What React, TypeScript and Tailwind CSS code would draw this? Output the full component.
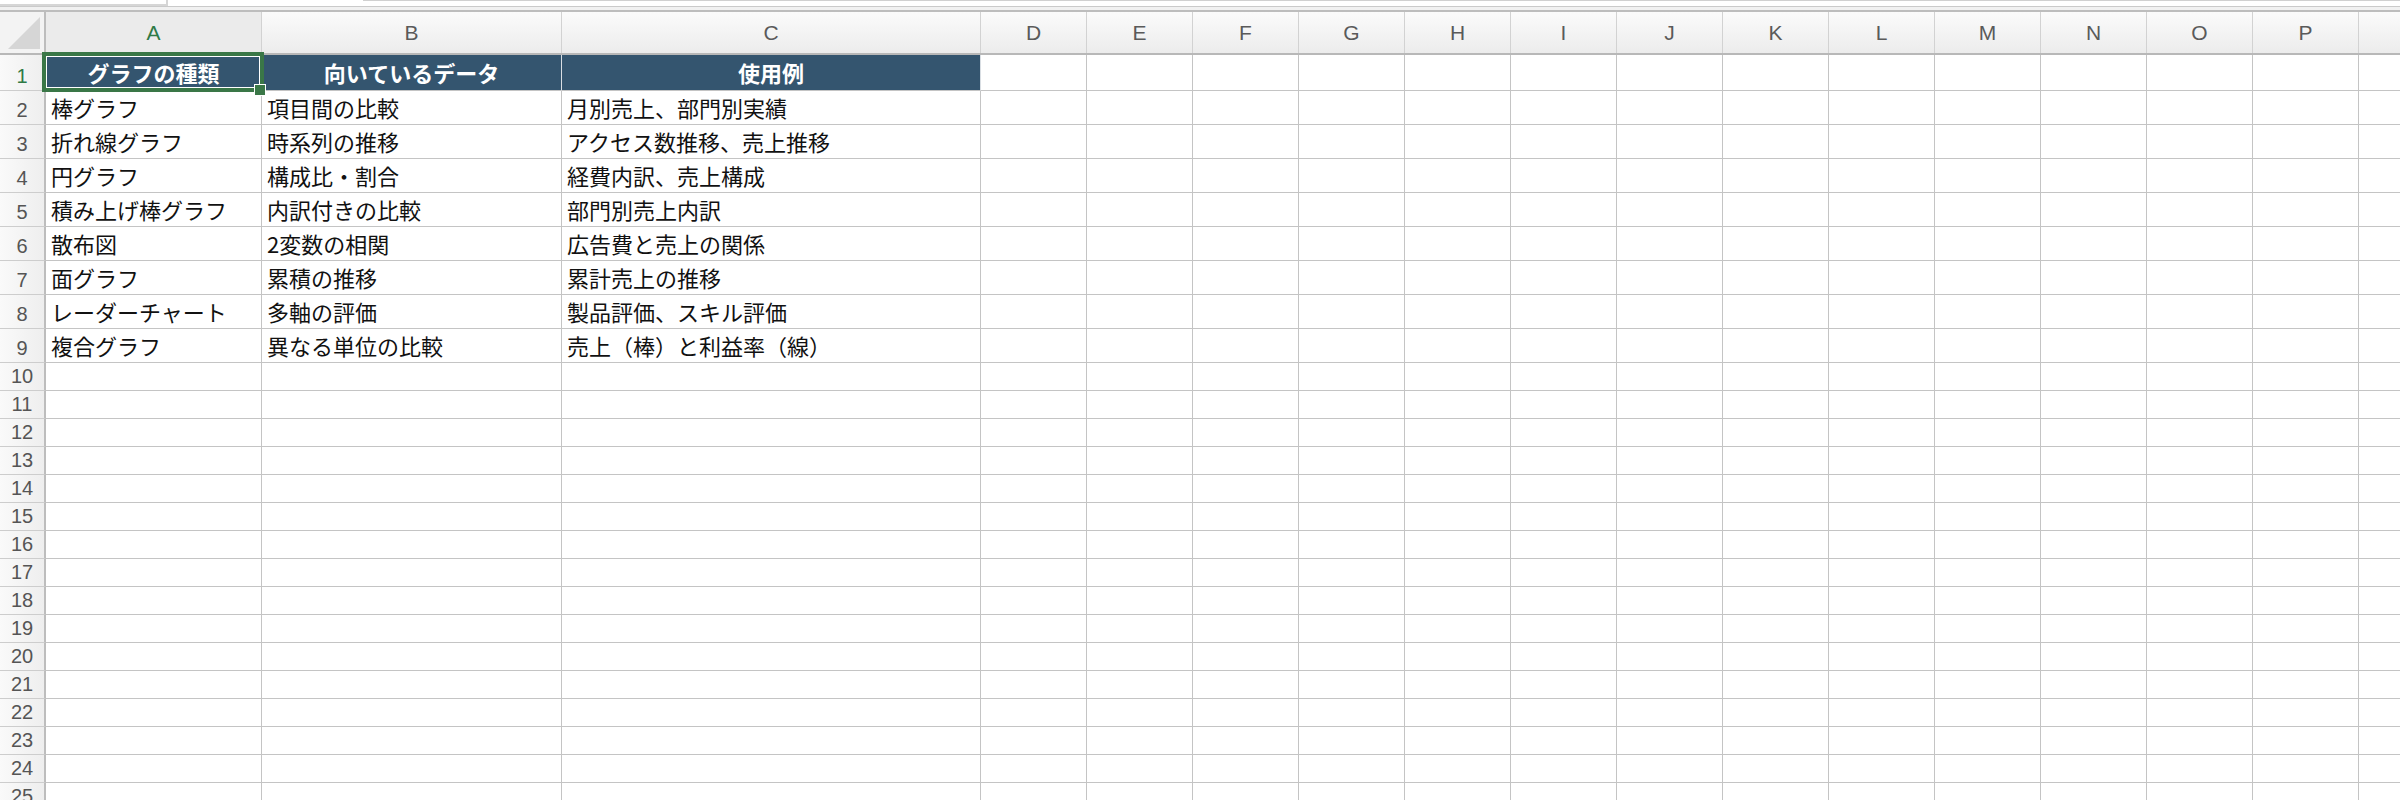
import React from "react";

type Col = { key: string; cls: string };

const COLUMNS: Col[] = [
  { key: "A", cls: "w-[216px]" },
  { key: "B", cls: "w-[300px]" },
  { key: "C", cls: "w-[419px]" },
  { key: "D", cls: "w-[106px]" },
  { key: "E", cls: "w-[106px]" },
  { key: "F", cls: "w-[106px]" },
  { key: "G", cls: "w-[106px]" },
  { key: "H", cls: "w-[106px]" },
  { key: "I", cls: "w-[106px]" },
  { key: "J", cls: "w-[106px]" },
  { key: "K", cls: "w-[106px]" },
  { key: "L", cls: "w-[106px]" },
  { key: "M", cls: "w-[106px]" },
  { key: "N", cls: "w-[106px]" },
  { key: "O", cls: "w-[106px]" },
  { key: "P", cls: "w-[106px]" },
  { key: "", cls: "w-[106px]" },
];

const HEADERS = ["グラフの種類", "向いているデータ", "使用例"];

const DATA: string[][] = [
  ["棒グラフ", "項目間の比較", "月別売上、部門別実績"],
  ["折れ線グラフ", "時系列の推移", "アクセス数推移、売上推移"],
  ["円グラフ", "構成比・割合", "経費内訳、売上構成"],
  ["積み上げ棒グラフ", "内訳付きの比較", "部門別売上内訳"],
  ["散布図", "2変数の相関", "広告費と売上の関係"],
  ["面グラフ", "累積の推移", "累計売上の推移"],
  ["レーダーチャート", "多軸の評価", "製品評価、スキル評価"],
  ["複合グラフ", "異なる単位の比較", "売上（棒）と利益率（線）"],
];

const EMPTY_ROWS = Array.from({ length: 16 }, (_, i) => i + 10);

const jp = "font-['Noto_Sans_CJK_JP','Noto_Sans',sans-serif]";
const hdrFont = "font-['Liberation_Sans',Arial,sans-serif]";

function RowNum({ n, active = false }: { n: number; active?: boolean }) {
  return (
    <div
      className={`flex w-[46px] shrink-0 items-end justify-center border-r-2 border-b border-r-[#bdbdbd] border-b-[#cdcdcd] bg-gradient-to-r from-[#fafafa] to-[#eeeeee] pb-[4px] text-[20px] leading-none ${hdrFont} ${
        active ? "text-[#2f7a46]" : "text-[#555]"
      }`}
    >
      {n}
    </div>
  );
}

function TopBar() {
  return (
    <div className="flex h-[12px] w-full">
      <div className="h-[6px] w-[168px] shrink-0 border-r-2 border-b-2 border-[#d6d6d6] bg-white" />
      <div className="h-[6px] w-[195px] shrink-0 bg-white" />
      <div className="h-[6px] flex-1 border-t border-[#d0d0d0] bg-white" />
    </div>
  );
}

export default function App() {
  return (
    <div className="relative h-[800px] w-[2400px] overflow-hidden bg-white">
      <div className="absolute left-0 top-[6px] h-px w-full bg-[#cacaca]" />
      <div className="absolute left-0 top-[7px] h-[3px] w-full bg-[#f1f1f1]" />
      <div className="absolute left-0 top-[10px] h-[2px] w-full bg-[#bdbdbd]" />
      <TopBar />

      {/* column header */}
      <div className="flex h-[43px] border-b-2 border-[#b8b8b8] bg-gradient-to-b from-[#fbfbfb] to-[#ececec]">
        <div className="flex w-[46px] shrink-0 items-end justify-end border-r-2 border-[#bdbdbd] bg-[#f3f3f3] pb-[4px] pr-[4px]">
          <svg width="32" height="32" viewBox="0 0 32 32">
            <polygon points="32,0 32,32 0,32" fill="#d6d6d6" />
          </svg>
        </div>
        {COLUMNS.map((c, i) => (
          <div
            key={i}
            className={`${c.cls} flex shrink-0 items-center justify-center border-r border-[#d2d2d2] text-[21px] ${hdrFont} ${
              c.key === "A" ? "bg-[#ebebeb] text-[#2f7a46]" : "text-[#5a5a5a]"
            }`}
          >
            {c.key}
          </div>
        ))}
      </div>

      {/* row 1 */}
      <div className="flex h-[36px]">
        <RowNum n={1} active />
        {COLUMNS.map((c, i) => (
          <div
            key={i}
            className={`${c.cls} flex shrink-0 items-center justify-center border-r border-b ${
              i < 3
                ? `border-r-[#d9dee3] border-b-[#c4c4c4] bg-[#34556f] text-[22px] font-bold text-white ${jp}`
                : "border-[#c4c4c4]"
            }`}
          >
            {i < 3 ? HEADERS[i] : null}
          </div>
        ))}
      </div>

      {/* rows 2-9 */}
      {DATA.map((row, r) => (
        <div key={r} className="flex h-[34px]">
          <RowNum n={r + 2} />
          {COLUMNS.map((c, i) => (
            <div
              key={i}
              className={`${c.cls} flex shrink-0 items-center overflow-hidden whitespace-nowrap border-r border-b border-[#c4c4c4] pl-[5px] text-[22px] text-[#111] ${jp}`}
            >
              {i < 3 ? row[i] : null}
            </div>
          ))}
        </div>
      ))}

      {/* empty rows */}
      {EMPTY_ROWS.map((n) => (
        <div key={n} className="flex h-[28px]">
          <RowNum n={n} />
          {COLUMNS.map((c, i) => (
            <div key={i} className={`${c.cls} shrink-0 border-r border-b border-[#c4c4c4]`} />
          ))}
        </div>
      ))}

      {/* active cell A1 */}
      <div className="absolute left-[42px] top-[52px] h-[40px] w-[222px] border-[4px] border-[#3a7747]">
        <div className="h-full w-full border border-white" />
      </div>
      <div className="absolute left-[254px] top-[84px] h-[12px] w-[12px] border border-white bg-[#3a7747]" />
    </div>
  );
}
